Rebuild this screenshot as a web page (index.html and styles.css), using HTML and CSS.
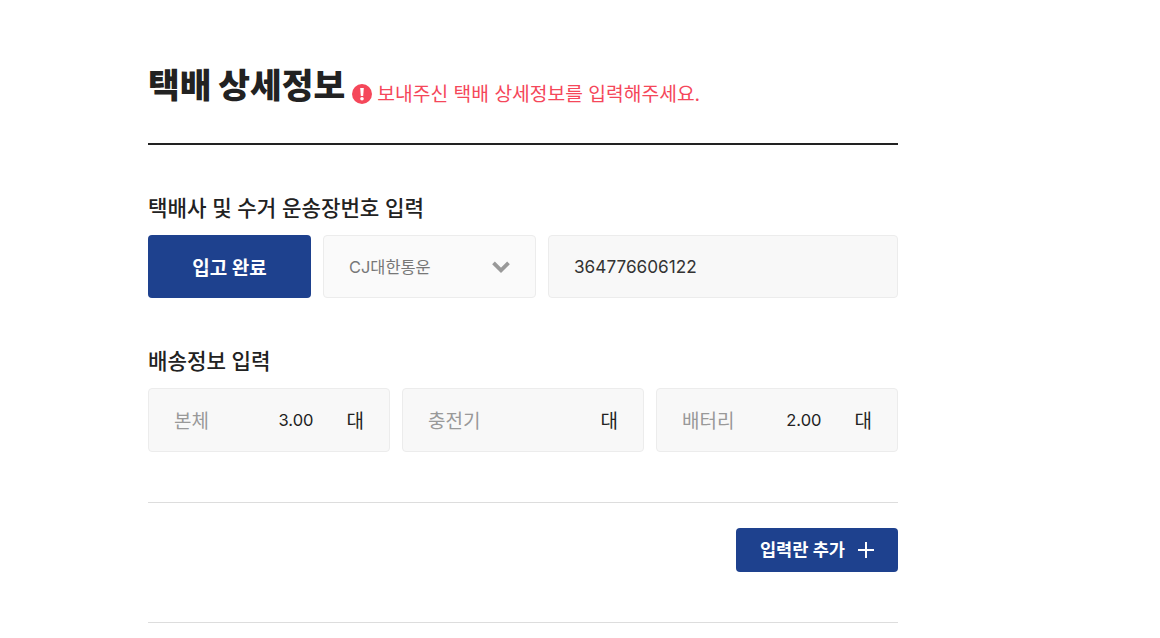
FILE: index.html
```html
<!DOCTYPE html>
<html lang="ko">
<head>
  <meta charset="UTF-8">
  <meta name="viewport" content="width=device-width, initial-scale=1.0">
  <title>택배 상세정보</title>
  <link rel="stylesheet" href="styles.css">
</head>
<body>

  <div class="container">
    <div class="title-row">
      <h2>택배 상세정보</h2>
      <p class="notice">
        <svg class="notice-icon" viewBox="0 0 20 20" aria-hidden="true">
          <circle cx="10" cy="10" r="10" fill="#f5475a"/>
          <path d="M8.2 4h3.6l-.6 8H8.8z" fill="#fff"/>
          <circle cx="10" cy="14.8" r="1.8" fill="#fff"/>
        </svg>
        보내주신 택배 상세정보를 입력해주세요.
      </p>
    </div>

    <h3 class="first">택배사 및 수거 운송장번호 입력</h3>
    <div class="row-return">
      <button class="btn-done">입고 완료</button>
      <div class="select-box">
        <span class="select-value">CJ대한통운</span>
        <svg class="chevron" viewBox="0 0 18 12" aria-hidden="true">
          <path d="M1.5 1.8l7.5 7.5 7.5-7.5" fill="none" stroke="#999" stroke-width="3.8"/>
        </svg>
      </div>
      <div class="field tracking">364776606122</div>
    </div>

    <h3 class="second">배송정보 입력</h3>
    <div class="row-items">
      <div class="field item">
        <span class="item-name">본체</span>
        <span class="item-qty">3.00</span>
        <span class="item-unit">대</span>
      </div>
      <div class="field item">
        <span class="item-name">충전기</span>
        <span class="item-qty"></span>
        <span class="item-unit">대</span>
      </div>
      <div class="field item">
        <span class="item-name">배터리</span>
        <span class="item-qty">2.00</span>
        <span class="item-unit">대</span>
      </div>
    </div>

    <div class="add-row">
      <button class="btn-add">
        <span class="btn-add-text">입력란 추가</span>
        <svg class="plus" viewBox="0 0 16 16" aria-hidden="true">
          <path d="M8 0v16M0 8h16" fill="none" stroke="#fff" stroke-width="2"/>
        </svg>
      </button>
    </div>
  </div>

</body>
</html>
```

FILE: styles.css
```css
* { box-sizing: border-box; }

html, body {
  height: 100%;
  overflow: hidden;
}

body {
  margin: 0;
  background: #fff;
  color: #222;
  font-family: Inter, "Noto Sans CJK KR", sans-serif;
}

.container {
  width: 750px;
  margin-left: 148px;
  padding-top: 60px;
}

.title-row {
  display: flex;
  align-items: flex-end;
  height: 85px;
  padding-bottom: 32px;
  border-bottom: 2px solid #222;
}

h2 {
  margin: 0;
  font-size: 34.5px;
  line-height: 50px;
  font-weight: 900;
  color: #222;
}

.notice {
  display: flex;
  align-items: center;
  margin: 0 0 3px 7px;
  font-size: 19.25px;
  line-height: 28px;
  color: #f5475a;
}

.notice-icon {
  width: 20px;
  height: 20px;
  margin-right: 5px;
}

h3 {
  margin: 0;
  font-size: 21.2px;
  font-weight: 500;
  line-height: 30px;
  color: #222;
}

h3.first {
  margin-top: 48px;
  margin-bottom: 12px;
}

h3.second {
  margin-top: 48px;
  margin-bottom: 12px;
}

.row-return {
  display: flex;
  gap: 12px;
  height: 63px;
}

button {
  border: none;
  border-radius: 4px;
  background: #1e418e;
  color: #fff;
  font-family: inherit;
  font-weight: 700;
  cursor: pointer;
}

.btn-done {
  width: 163px;
  padding-bottom: 2px;
  font-size: 19px;
}

.field, .select-box {
  display: flex;
  align-items: center;
  border: 1px solid #ececec;
  border-radius: 4px;
  background: #f8f8f8;
}

.select-box {
  justify-content: space-between;
  width: 213px;
  padding: 0 25px;
  background: #fafafa;
  font-size: 16.4px;
  color: #777;
}

.select-value {
  margin-bottom: 2px;
}

.chevron {
  width: 18px;
  height: 12px;
}

.tracking {
  flex: 1;
  padding-left: 25px;
  font-size: 17.2px;
  color: #333;
}

.row-items {
  display: flex;
  gap: 12px;
  height: 64px;
}

.item {
  flex: 1;
  padding: 0 25px 2px;
  font-size: 19px;
}

.item-name {
  color: #999;
}

.item-qty {
  flex: 1;
  margin-top: 2px;
  padding-right: 33px;
  font-size: 16.5px;
  text-align: right;
}

.add-row {
  display: flex;
  justify-content: flex-end;
  height: 121px;
  margin-top: 50px;
  padding-top: 25px;
  border-top: 1px solid #ddd;
  border-bottom: 1px solid #ddd;
}

.btn-add {
  display: flex;
  align-items: center;
  justify-content: center;
  gap: 13px;
  width: 162px;
  height: 44px;
  padding-right: 6px;
  font-size: 17.6px;
}

.btn-add-text {
  margin-bottom: 3px;
}

.plus {
  width: 16px;
  height: 16px;
}
```
